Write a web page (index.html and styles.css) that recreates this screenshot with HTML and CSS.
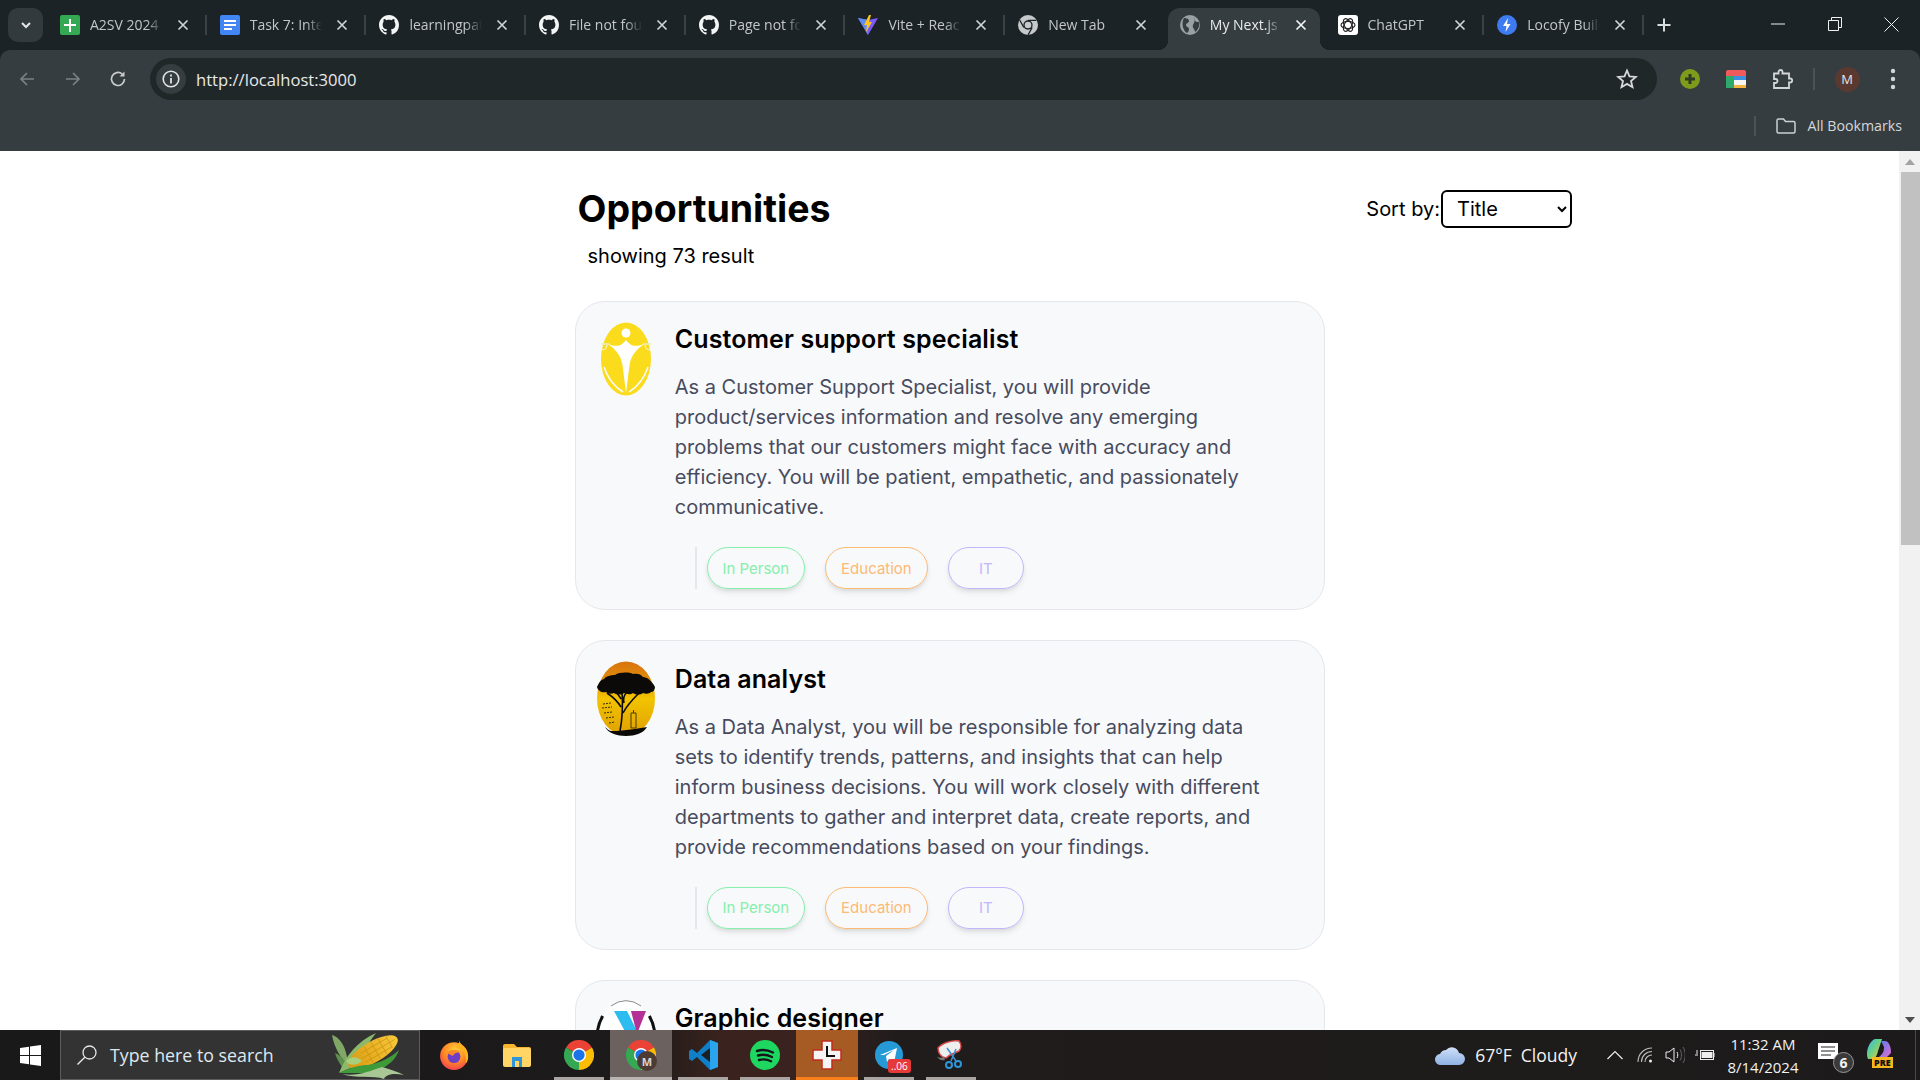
FILE: index.html
```html
<!DOCTYPE html>
<html lang="en">
<head>
<meta charset="utf-8">
<title>My Next.js App</title>
<link rel="stylesheet" href="styles.css">
</head>
<body>
<svg class="defs" aria-hidden="true">
  <defs>
    <symbol id="gh" viewBox="0 0 16 16"><path fill="#f4f5f5" d="M8 0C3.58 0 0 3.58 0 8c0 3.54 2.29 6.53 5.47 7.59.4.07.55-.17.55-.38 0-.19-.01-.82-.01-1.49-2.01.37-2.53-.49-2.69-.94-.09-.23-.48-.94-.82-1.13-.28-.15-.68-.52-.01-.53.63-.01 1.08.58 1.23.82.72 1.21 1.87.87 2.33.66.07-.52.28-.87.51-1.07-1.78-.2-3.64-.89-3.64-3.95 0-.87.31-1.59.82-2.15-.08-.2-.36-1.02.08-2.12 0 0 .67-.21 2.2.82.64-.18 1.32-.27 2-.27.68 0 1.36.09 2 .27 1.53-1.04 2.2-.82 2.2-.82.44 1.1.16 1.92.08 2.12.51.56.82 1.27.82 2.15 0 3.07-1.87 3.75-3.65 3.95.29.25.54.73.54 1.48 0 1.07-.01 1.93-.01 2.2 0 .21.15.46.55.38A8.013 8.013 0 0016 8c0-4.42-3.58-8-8-8z"/></symbol>
    <symbol id="x" viewBox="0 0 16 16"><path d="M3.500 3.500l9 9M12.500 3.500l-9 9" stroke="currentColor" stroke-width="1.700" fill="none"/></symbol>
    <symbol id="chrome" viewBox="0 0 24 24">
      <path fill="#ea4335" d="M12 12L1.600 6A12 12 0 0 1 22.400 6Z"/>
      <path fill="#34a853" d="M12 12L1.600 6A12 12 0 0 0 12 24Z"/>
      <path fill="#fbbc04" d="M12 12L22.400 6A12 12 0 0 1 12 24Z"/>
      <circle cx="12" cy="12" r="5.600" fill="#fff"/><circle cx="12" cy="12" r="4.500" fill="#1a73e8"/>
    </symbol>
    <radialGradient id="fox" cx=".55" cy=".3" r=".8"><stop offset="0" stop-color="#ffd43a"/><stop offset=".5" stop-color="#ff8a25"/><stop offset="1" stop-color="#f2305a"/></radialGradient>
    <linearGradient id="pilot" x1="0" y1="0" x2="1" y2="1"><stop offset="0" stop-color="#3fb6ef"/><stop offset=".45" stop-color="#66d08a"/><stop offset="1" stop-color="#f6c834"/></linearGradient>
    <linearGradient id="pilot2" x1="0" y1="0" x2="1" y2="1"><stop offset="0" stop-color="#4d7ff0"/><stop offset="1" stop-color="#e36cd0"/></linearGradient>
    <linearGradient id="sunset" x1="0" y1="0" x2="0" y2="1"><stop offset="0" stop-color="#d9730f"/><stop offset=".22" stop-color="#e08a0a"/><stop offset=".5" stop-color="#f3c400"/><stop offset="1" stop-color="#dfa000"/></linearGradient>
    <linearGradient id="kernel" x1="0" y1="0" x2="1" y2="0"><stop offset="0" stop-color="#d99a10"/><stop offset="1" stop-color="#f7c93a"/></linearGradient>
    <linearGradient id="cloudfill" x1="0" y1="0" x2="0" y2="1"><stop offset="0" stop-color="#cfe0f7"/><stop offset="1" stop-color="#8fb2e4"/></linearGradient>
  </defs>
</svg>

<header class="browser">
  <div class="strip">
    <div class="tab-search"><svg width="14" height="14" viewBox="0 0 14 14"><path d="M3 5l4 4 4-4" fill="none" stroke="#e3e5e6" stroke-width="2"/></svg></div>

    <div class="tab">
      <svg class="fav" viewBox="0 0 20 20"><rect x="0" width="20" height="20" rx="2" fill="#34a853"/><path d="M9 4h2v5h5v2h-5v6H9v-6H4V9h5z" fill="#fff"/></svg>
      <span class="tab-label">A2SV 2024 Cohort</span>
      <svg class="tab-x"><use href="#x"/></svg>
    </div>
    <div class="tab">
      <svg class="fav" viewBox="0 0 20 20"><rect width="20" height="20" rx="2" fill="#4285f4"/><path d="M4 5h12v2H4zM4 9h12v2H4zM4 13h8v2H4z" fill="#fff"/></svg>
      <span class="tab-label">Task 7: Integration</span>
      <svg class="tab-x"><use href="#x"/></svg>
    </div>
    <div class="tab">
      <svg class="fav"><use href="#gh"/></svg>
      <span class="tab-label">learningpath</span>
      <svg class="tab-x"><use href="#x"/></svg>
    </div>
    <div class="tab">
      <svg class="fav"><use href="#gh"/></svg>
      <span class="tab-label">File not found</span>
      <svg class="tab-x"><use href="#x"/></svg>
    </div>
    <div class="tab">
      <svg class="fav"><use href="#gh"/></svg>
      <span class="tab-label">Page not found</span>
      <svg class="tab-x"><use href="#x"/></svg>
    </div>
    <div class="tab">
      <svg class="fav" viewBox="0 0 20 20"><path d="M0 3l10 2 10-2-10 17z" fill="#7c5cf5"/><path d="M0 3l10 2v15z" fill="#5d8df2"/><path d="M11 0l-5 10h3l-1 7 6-10h-3l2-7z" fill="#ffc51e"/></svg>
      <span class="tab-label">Vite + React</span>
      <svg class="tab-x"><use href="#x"/></svg>
    </div>
    <div class="tab tab-before-active">
      <svg class="fav" viewBox="0 0 24 24"><circle cx="12" cy="12" r="12" fill="#c6c9ca"/><circle cx="12" cy="12" r="5.600" fill="#1c2327"/><circle cx="12" cy="12" r="4" fill="#c6c9ca"/><path d="M12 6.400h10M7 15l-5-9M17 15l-5 9" stroke="#1c2327" stroke-width="1.600"/></svg>
      <span class="tab-label">New Tab</span>
      <svg class="tab-x"><use href="#x"/></svg>
    </div>
    <div class="tab tab-active">
      <svg class="fav" viewBox="0 0 20 20"><circle cx="10" cy="10" r="10" fill="#9aa0a3"/><path d="M4 3c3 0 5 1 5 3s-3 2-3 4 3 2 3 4-1 3-2 4C3 16 1 8 4 3zM14 2c1 2 0 3 1 4s3 1 4 1c1 4-1 8-4 10 0-3-3-4-2-7s2-1 1-8z" fill="#363d41"/></svg>
      <span class="tab-label">My Next.js App</span>
      <svg class="tab-x"><use href="#x"/></svg>
    </div>
    <div class="tab">
      <svg class="fav" viewBox="0 0 20 20"><rect width="20" height="20" rx="3" fill="#fff"/><g fill="none" stroke="#222" stroke-width="1.100"><ellipse cx="10" cy="10" rx="7" ry="3.600"/><ellipse cx="10" cy="10" rx="7" ry="3.600" transform="rotate(60 10 10)"/><ellipse cx="10" cy="10" rx="7" ry="3.600" transform="rotate(120 10 10)"/></g></svg>
      <span class="tab-label">ChatGPT</span>
      <svg class="tab-x"><use href="#x"/></svg>
    </div>
    <div class="tab">
      <svg class="fav" viewBox="0 0 20 20"><circle cx="10" cy="10" r="10" fill="#3f7bf0"/><path d="M11 3L6 11h3.500L8.500 17l5-8H10z" fill="#fff"/></svg>
      <span class="tab-label">Locofy Builder</span>
      <svg class="tab-x"><use href="#x"/></svg>
    </div>

    <div class="new-tab"><svg width="16" height="16" viewBox="0 0 16 16"><path d="M8 1.500v13M1.500 8h13" stroke="#d9dcdd" stroke-width="2"/></svg></div>
    <div class="win-controls">
      <div class="win-btn"><svg width="14" height="14" viewBox="0 0 14 14"><path d="M0 7h14" stroke="#f0f0f0"/></svg></div>
      <div class="win-btn"><svg width="14" height="14" viewBox="0 0 14 14"><path d="M.5 3.500h10v10H.5zM3.500 3.500v-3h10v10h-3" fill="none" stroke="#f0f0f0"/></svg></div>
      <div class="win-btn"><svg width="15" height="15" viewBox="0 0 15 15"><path d="M.5.5l14 14M14.500.5l-14 14" stroke="#f0f0f0"/></svg></div>
    </div>
  </div>

  <div class="toolbar">
    <div class="nav-row">
      <div class="slot"><svg width="18" height="18" viewBox="0 0 18 18"><path d="M16 9H3M9 3L3 9l6 6" fill="none" stroke="#7b8083" stroke-width="1.700"/></svg></div>
      <div class="slot"><svg width="18" height="18" viewBox="0 0 18 18"><path d="M2 9h13M9 3l6 6-6 6" fill="none" stroke="#7b8083" stroke-width="1.700"/></svg></div>
      <div class="slot slot-reload"><svg width="18" height="18" viewBox="0 0 18 18"><path d="M15.500 9A6.500 6.500 0 1 1 13.300 4.100" fill="none" stroke="#c9cccd" stroke-width="1.700"/><path d="M15.500 1.500v5h-5z" fill="#c9cccd"/></svg></div>
      <div class="omnibox">
        <div class="site-info"><svg width="20" height="20" viewBox="0 0 20 20"><circle cx="10" cy="10" r="7.800" fill="none" stroke="#e1e3e4" stroke-width="1.600"/><path d="M10 9v5.500M10 5.500v2" stroke="#e1e3e4" stroke-width="1.800"/></svg></div>
        <span class="url">http://localhost:3000</span>
        <svg class="star" width="22" height="22" viewBox="0 0 22 22"><path d="M11 2.500l2.500 5.800 6.300.6-4.800 4.100 1.500 6.200-5.500-3.300-5.500 3.300 1.500-6.200-4.800-4.100 6.300-.6z" fill="none" stroke="#d6d8d9" stroke-width="1.800"/></svg>
      </div>
      <div class="actions">
        <div class="slot"><svg width="20" height="20" viewBox="0 0 20 20"><circle cx="10" cy="10" r="10" fill="#7d9c1c"/><path d="M10 5v10M5 10h10" stroke="#2f3b22" stroke-width="3"/></svg></div>
        <div class="slot"><svg width="20" height="18" viewBox="0 0 20 18"><rect width="20" height="18" rx="2" fill="#f15a5a"/><rect y="6" width="8" height="12" fill="#2fa96b"/><rect x="8" y="6" width="12" height="12" fill="#3f8fe0"/><rect x="8" y="10" width="12" height="7" fill="#f5f5f5"/><rect x="8" y="15" width="12" height="3" fill="#f5b53f"/></svg></div>
        <div class="slot"><svg width="22" height="22" viewBox="0 0 22 22"><path d="M3 5.500h4.500V4a2 2 0 0 1 4 0v1.500H18v5h1.200a2 2 0 0 1 0 4H18V20H3v-5h1.500a2 2 0 0 0 0-4H3z" fill="none" stroke="#d3d6d7" stroke-width="1.800"/></svg></div>
        <div class="action-sep"></div>
        <div class="slot"><span class="avatar">M</span></div>
        <div class="slot"><svg width="6" height="22" viewBox="0 0 6 22"><circle cx="3" cy="3" r="2.200" fill="#d3d6d7"/><circle cx="3" cy="11" r="2.200" fill="#d3d6d7"/><circle cx="3" cy="19" r="2.200" fill="#d3d6d7"/></svg></div>
      </div>
    </div>
    <div class="bookmarks">
      <div class="bm-sep"></div>
      <svg width="20" height="16" viewBox="0 0 20 16"><path d="M1 2.500a1.500 1.500 0 0 1 1.500-1.500h5l2 2.500h8a1.500 1.500 0 0 1 1.500 1.500v8.500a1.500 1.500 0 0 1-1.500 1.500h-15a1.500 1.500 0 0 1-1.500-1.500z" fill="none" stroke="#cdd0d1" stroke-width="1.500"/></svg>
      <span class="bm-label">All Bookmarks</span>
    </div>
  </div>
</header>

<main class="viewport">
  <div class="page">
    <div class="page-head">
      <h1 class="page-title">Opportunities</h1>
      <div class="sort">
        <label class="sort-label" for="sort">Sort by:</label>
        <select class="sort-select" id="sort"><option>Title</option><option>Date</option></select>
      </div>
    </div>
    <p class="result-count">showing 73 result</p>

    <div class="cards">
      <article class="card">
        <svg class="logo" viewBox="0 0 60 75">
          <ellipse cx="30" cy="38" rx="25" ry="36.500" fill="#fbdc1c"/>
          <circle cx="30" cy="12" r="4.500" fill="#fff"/>
          <path d="M12 23C22 27 26 24 30 19 34 24 38 27 48 23 41 28 35 34 33.500 44L30 72 26.500 44C25 34 19 28 12 23Z" fill="#fff"/>
          <path d="M5 23H13M47 23H55" stroke="#e9efc0" stroke-width="1.500"/>
          <path d="M8 46C12 58 19 66 27 71M52 46C48 58 41 66 33 71" fill="none" stroke="#f8f9fb" stroke-width="1.600"/>
          <path d="M5 26C6 30 10 30 11 24M55 26C54 30 50 30 49 24" fill="none" stroke="#f8f9fb"/>
        </svg>
        <div class="card-body">
          <h2 class="card-title">Customer support specialist</h2>
          <p class="card-desc">As a Customer Support Specialist, you will provide product/services information and resolve any emerging problems that our customers might face with accuracy and efficiency. You will be patient, empathetic, and passionately communicative.</p>
          <div class="chips">
            <span class="chip chip-green">In Person</span>
            <span class="chip chip-orange">Education</span>
            <span class="chip chip-purple">IT</span>
          </div>
        </div>
      </article>

      <article class="card">
        <svg class="logo" viewBox="0 0 60 75">
          <ellipse cx="30" cy="37.500" rx="29" ry="37" fill="url(#sunset)"/>
          <path d="M1 26c2-4 3-7 7-8 2-3 7-4 11-4 4-3 14-3 18-1 4-1 8 0 10 3 4 0 9 4 12 10 0 3-2 5-4 5-2 2-5 2-8 1-3 2-7 2-10 0-3 2-6 1-9 0-3 2-7 2-10 0-3 1-6 1-8-1-4 1-8-1-9-5z" fill="#0c0a08"/>
          <path d="M24 70c2-10 3-24 2-40M27 52c3-6 8-12 16-20M25 46c-3-5-8-10-14-14M28 42c-1-4 0-8 3-11M25 38c-2-3-3-5-5-7" fill="none" stroke="#0c0a08" stroke-width="1.600"/>
          <path d="M9 66c3 2 3 4 8 4 8 0 22-2 34-4-3 6-12 9-21 9S12 72 9 66z" fill="#0c0a08"/>
          <path d="M7 43l8-1M6 47l10-1M8 52l8-1M10 57l8-1M13 62l6-1" stroke="#3a2d00" fill="none" stroke-dasharray="2 1"/>
          <path d="M35 52h5v15h-5zM37.500 49v3" fill="none" stroke="#4a3a00"/>
        </svg>
        <div class="card-body">
          <h2 class="card-title">Data analyst</h2>
          <p class="card-desc">As a Data Analyst, you will be responsible for analyzing data sets to identify trends, patterns, and insights that can help inform business decisions. You will work closely with different departments to gather and interpret data, create reports, and provide recommendations based on your findings.</p>
          <div class="chips">
            <span class="chip chip-green">In Person</span>
            <span class="chip chip-orange">Education</span>
            <span class="chip chip-purple">IT</span>
          </div>
        </div>
      </article>

      <article class="card">
        <svg class="logo" viewBox="0 0 60 75">
          <ellipse cx="30" cy="38" rx="29" ry="37" fill="#fff"/>
          <path d="M15 6A29 37 0 0 1 45 6" fill="none" stroke="#8a8a8a"/>
          <path d="M6.700 16A29 37 0 0 0 1 38M53.300 16A29 37 0 0 1 59 38" fill="none" stroke="#111" stroke-width="3"/>
          <path d="M18 11h13l14 28H33z" fill="#2cbcef"/>
          <path d="M35 11h15L41 34z" fill="#b23296"/>
        </svg>
        <div class="card-body">
          <h2 class="card-title">Graphic designer</h2>
        </div>
      </article>
    </div>
  </div>

  <div class="scrollbar">
    <div class="scroll-btn"><span class="arrow-up"></span></div>
    <div class="scroll-track"><div class="scroll-thumb"></div></div>
    <div class="scroll-btn"><span class="arrow-down"></span></div>
  </div>
</main>

<footer class="taskbar">
  <div class="start"><svg width="21" height="21" viewBox="0 0 21 21"><path d="M0 3l9-1.300V10H0zM10 1.500L21 0v10H10zM0 11h9v8.300L0 18zM10 11h11v10l-11-1.500z" fill="#fff"/></svg></div>
  <div class="search">
    <svg width="22" height="22" viewBox="0 0 22 22"><circle cx="13.500" cy="8.500" r="6.500" fill="none" stroke="#e6e6e6" stroke-width="1.300"/><path d="M8.800 13.200L1.500 20.500" stroke="#e6e6e6" stroke-width="1.400"/></svg>
    <span class="search-text">Type here to search</span>
    <svg class="corn" width="74" height="48" viewBox="0 0 74 48">
      <path d="M0 4C7 6 13 14 15 26L22 33 17 36C9 28 2 16 0 4Z" fill="#7fa867"/>
      <path d="M3 22C8 24 12 28 15 33L10 36C7 31 4 27 3 22Z" fill="#5f8f4c"/>
      <path d="M7 42C14 24 26 10 44 2 38 10 32 18 30 32Z" fill="#8bb86a"/>
      <g transform="rotate(-30 41 21)">
        <ellipse cx="41" cy="21" rx="28" ry="10.500" fill="url(#kernel)"/>
        <path d="M30 16h30M28 21h38M30 26h30M36 12v18M44 12v18M52 12v18M60 13v14" stroke="#c98c0c" stroke-width=".6" fill="none"/>
      </g>
      <path d="M7 42C20 36 28 34 36 34 48 32 60 26 67 19 62 34 46 42 28 42Z" fill="#3f9a3a"/>
      <path d="M14 30C20 24 26 26 30 30 26 34 18 36 14 30Z" fill="#a8cf7e"/>
      <path d="M10 43C24 46 38 40 50 36 58 38 66 41 72 44 62 42 54 43 52 48 42 44 24 48 10 43Z" fill="#a9c795"/>
    </svg>
  </div>

  <div class="apps">
    <div class="app app-fox"><svg width="30" height="30" viewBox="0 0 28 28"><circle cx="14" cy="15" r="13" fill="url(#fox)"/><path d="M19 0c0 3 3 5 6 8 3 5 3 11 0 14C26 15 23 8 16 7c2-2 3-4 3-7z" fill="#ffb21e"/><circle cx="14" cy="15.500" r="6" fill="#6e3fc4"/><path d="M7 12c3-3 10-4 14 0-4-1-7 0-8 3z" fill="#ff8a25"/></svg></div>
    <div class="app"><svg width="28" height="24" viewBox="0 0 28 24"><path d="M0 3a2 2 0 0 1 2-2h9l3 3h12a2 2 0 0 1 2 2v4H0z" fill="#f5b52e"/><rect y="5" width="28" height="19" rx="2" fill="#ffd665"/><path d="M9 14h10v10h-3v-6h-4v6H9z" fill="#2e96d8"/></svg></div>
    <div class="app app-running"><svg width="30" height="30"><use href="#chrome"/></svg></div>
    <div class="app app-running app-hover">
      <svg width="30" height="30"><use href="#chrome"/></svg>
      <span class="app-m">M</span>
    </div>
    <div class="app app-running"><svg width="29" height="30" viewBox="0 0 29 30"><path d="M21 0L8 13 3 9 0 11v8l3 2 5-4 13 13 8-3V3z" fill="#0f7fc9"/><path d="M21 0l8 3v24l-8 3z" fill="#2aa4ec"/><path d="M21 8v14l-9-7z" fill="#1c2023"/></svg></div>
    <div class="app app-running"><svg width="30" height="30" viewBox="0 0 30 30"><circle cx="15" cy="15" r="15" fill="#1ed760"/><path d="M7 11c6-2 11-1 16 1.500M8 15.500c5-1.500 9-1 14 1.500M9 20c4-1 8-.8 12 1.200" fill="none" stroke="#14171a" stroke-width="2.400" stroke-linecap="round"/></svg></div>
    <div class="app app-active"><svg width="30" height="30" viewBox="0 0 30 30"><path d="M10 1h10v9h9v10h-9v9H10v-9H1V10h9z" fill="#f4f4f4" stroke="#c42b1c" stroke-width="1.500"/><path d="M15 6v10h8" fill="none" stroke="#111" stroke-width="2"/></svg></div>
    <div class="app app-running">
      <svg width="28" height="28" viewBox="0 0 28 28"><circle cx="14" cy="14" r="14" fill="#259ad6"/><path d="M5 14L22 7l-3 15-5-4-2 3-1-6 8-6-10 5z" fill="#fff"/></svg>
      <span class="app-count">..06</span>
    </div>
    <div class="app app-running"><svg width="30" height="30" viewBox="0 0 30 30"><path d="M2 8C6 3 16 0 23 1c3 4 2 8 0 10L14 15 10 18C5 17 2 13 2 8z" fill="#eee" stroke="#d84a4a" stroke-width="1.500"/><path d="M8 17c-3 1-6 1-7-1 1 3 4 5 8 4z" fill="#777"/><path d="M11 8l9 13M20 9l-5 12" stroke="#3d8fd0" stroke-width="1.500"/><circle cx="22" cy="24" r="3" fill="none" stroke="#2e96d8" stroke-width="2"/><circle cx="13" cy="25" r="3" fill="none" stroke="#2e96d8" stroke-width="2"/></svg></div>
  </div>

  <div class="tray">
    <div class="weather">
      <svg width="30" height="22" viewBox="0 0 30 22"><path d="M6 21a5.500 5.500 0 0 1-1-11 7 7 0 0 1 6-4 7.500 7.500 0 0 1 13 3 6 6 0 0 1 0 12z" fill="url(#cloudfill)"/></svg>
      <span class="weather-text">67°F&nbsp; Cloudy</span>
    </div>
    <div class="tray-slot"><svg width="16" height="10" viewBox="0 0 16 10"><path d="M.5 9L8 1.500 15.500 9" fill="none" stroke="#eee" stroke-width="1.200"/></svg></div>
    <div class="tray-slot"><svg width="16" height="16" viewBox="0 0 16 16"><path d="M1 15C1 7 7 1 15 1M4.500 15C4.500 9 9 4.500 15 4.500M8 15c0-4 3-7 7-7" fill="none" stroke="#bdbdbd" stroke-width="1.100"/><circle cx="13.500" cy="14" r="1.500" fill="#eee"/></svg></div>
    <div class="tray-slot"><svg width="20" height="18" viewBox="0 0 20 18"><path d="M1 6h3l5-4v14l-5-4H1z" fill="none" stroke="#eee"/><path d="M12 6c1 2 1 4 0 6" fill="none" stroke="#eee"/><path d="M15 3.500c2 3.500 2 7.500 0 11M18 1c3 5 3 11 0 16" fill="none" stroke="#666"/></svg></div>
    <div class="tray-slot"><svg width="20" height="12" viewBox="0 0 20 12"><rect x="5.500" y="1.500" width="13" height="9" fill="none" stroke="#eee"/><rect x="6.500" y="3" width="11" height="6" fill="#eee"/><path d="M19 4v4" stroke="#eee"/><path d="M0 6h3M2 1v4" stroke="#eee"/></svg></div>
    <div class="clock"><span>11:32 AM</span><span>8/14/2024</span></div>
    <div class="notify">
      <svg width="22" height="18" viewBox="0 0 22 18"><path d="M0 0h20v16H0z" fill="#fff"/><path d="M3 4h14M3 8h14M3 12h10" stroke="#222" stroke-width="1.200"/></svg>
      <span class="notify-count">6</span>
    </div>
    <div class="copilot">
      <svg width="26" height="24" viewBox="0 0 26 24"><path d="M9 0h7l-4 12c-1 5-3 8-7 8H2C-1 14 3 2 9 0z" fill="url(#pilot)"/><path d="M15 2h4c4 0 6 6 6 12l-4 4h-8c4-3 5-6 5-10z" fill="url(#pilot2)"/></svg>
      <span class="pre">PRE</span>
    </div>
    <div class="show-desktop"></div>
  </div>
</footer>
</body>
</html>
```

FILE: styles.css
```css
* { box-sizing: border-box; }

html, body { margin: 0; height: 100%; }

body {
  display: flex;
  flex-direction: column;
  width: 1920px;
  height: 1080px;
  overflow: hidden;
  background: #fff;
  font-family: "Inter", "Liberation Sans", sans-serif;
}

.defs { position: absolute; width: 0; height: 0; }

/* Browser chrome */
.browser { flex: none; background: #1c2327; font-family: "Open Sans", "Noto Sans", sans-serif; }

.strip { display: flex; height: 50px; padding: 8px 0 0 8px; }

.tab-search {
  flex: none;
  width: 35px;
  height: 34px;
  margin-right: 3px;
  display: flex;
  align-items: center;
  justify-content: center;
  background: #333a3e;
  border-radius: 10px;
}

.tab {
  position: relative;
  flex: none;
  width: 159.7px;
  height: 42px;
  padding: 0 15px 8px 14px;
  display: flex;
  align-items: center;
  gap: 10px;
  color: #c3c6c8;
}

.tab::after {
  content: "";
  position: absolute;
  right: -1px;
  top: 7px;
  width: 2px;
  height: 20px;
  background: #3a4246;
}

.tab-before-active::after { display: none; }

.tab-active {
  width: 151.7px;
  margin: 0 4px;
  padding: 0 11px 8px 12px;
  background: #363d41;
  border-radius: 12px 12px 0 0;
  color: #e7e9ea;
}

.tab-active::before {
  content: "";
  position: absolute;
  left: -10px;
  bottom: 0;
  width: 10px;
  height: 10px;
  background: radial-gradient(circle at 0 0, transparent 10px, #363d41 10.5px);
}

.tab-active::after {
  right: -10px;
  top: auto;
  bottom: 0;
  width: 10px;
  height: 10px;
  background: radial-gradient(circle at 100% 0, transparent 10px, #363d41 10.5px);
}

.fav { flex: none; width: 20px; height: 20px; }

.tab-label {
  flex: 1;
  min-width: 0;
  margin-right: 4px;
  overflow: hidden;
  white-space: nowrap;
  font-size: 14px;
  line-height: 20px;
  -webkit-mask-image: linear-gradient(to right, #000 78%, transparent 100%);
  mask-image: linear-gradient(to right, #000 78%, transparent 100%);
}

.tab-x { flex: none; width: 16px; height: 16px; margin-left: -2px; color: #d0d3d4; }
.tab-active .tab-x { color: #f2f3f3; }

.new-tab {
  flex: none;
  width: 32px;
  height: 34px;
  margin-left: 5px;
  display: flex;
  align-items: center;
  justify-content: center;
}

.win-controls { display: flex; margin: -8px 0 0 auto; height: 48px; }
.win-btn { width: 57px; display: flex; align-items: center; justify-content: center; }

.toolbar {
  height: 101px;
  background: #363d41;
  border-radius: 10px 10px 0 0;
  padding-top: 8px;
}

.nav-row { display: flex; align-items: center; height: 42px; padding-left: 4px; }

.slot {
  flex: none;
  width: 46px;
  height: 42px;
  display: flex;
  align-items: center;
  justify-content: center;
}

.slot-reload { padding-right: 2px; }

.omnibox {
  flex: 1;
  height: 42px;
  margin-left: 8px;
  display: flex;
  align-items: center;
  background: #202729;
  border-radius: 21px;
  padding: 0 19px 0 6px;
}

.site-info {
  width: 30px;
  height: 30px;
  border-radius: 50%;
  background: #363d41;
  display: flex;
  align-items: center;
  justify-content: center;
}

.url { flex: 1; margin-left: 10px; color: #e7e9ea; font-size: 16.6px; }
.star { flex: none; }

.actions { flex: none; width: 263px; display: flex; align-items: center; padding-left: 10px; }
.action-sep { flex: none; width: 2px; height: 22px; margin: 0 9px 0 8px; background: #4c5357; }

.avatar {
  width: 25px;
  height: 25px;
  border-radius: 50%;
  background: #5a3a30;
  color: #e9e4e2;
  font-size: 13px;
  display: flex;
  align-items: center;
  justify-content: center;
}

.bookmarks {
  height: 51px;
  display: flex;
  align-items: center;
  justify-content: flex-end;
  padding: 0 18px 0 0;
}

.bm-sep { width: 2px; height: 20px; margin-right: 20px; background: #4c5357; }
.bm-label { margin-left: 11px; color: #d4d7d8; font-size: 14.2px; }

/* Page */
.viewport { flex: 1; min-height: 0; display: flex; overflow: hidden; }

.page { flex: 1; min-width: 0; padding: 35px 0 0 575px; overflow: hidden; }

.page-head {
  width: 997px;
  height: 45px;
  display: flex;
  align-items: center;
  justify-content: space-between;
}

.page-title { margin: 0 0 0 2.5px; font-size: 37.5px; line-height: 45px; font-weight: 700; color: #000; }

.sort { display: flex; align-items: center; gap: 1px; }
.sort-label { font-size: 20px; color: #000; }

.sort-select {
  width: 131px;
  height: 38px;
  padding: 0 10px;
  font: 20px "Inter", sans-serif;
  color: #000;
  background: #fff;
  border: 2.5px solid #000;
  border-radius: 6px;
}

.result-count { margin: 10px 0 30px 12.5px; font-size: 20px; line-height: 30px; color: #000; }

.cards { width: 750px; display: flex; flex-direction: column; gap: 30px; }

.card {
  display: flex;
  gap: 18.75px;
  padding: 19.25px 20px 20px;
  background: #f8f9fb;
  border: 1.25px solid #e5e7eb;
  border-radius: 30px;
}

.logo { flex: none; width: 60px; height: 75px; }

.card-body { flex: 1; min-width: 0; }

.card-title { margin: 0 0 15px; font-size: 25px; line-height: 36px; font-weight: 600; letter-spacing: .1px; color: #000; }

.card-desc { margin: 0 0 25px; width: 605px; font-size: 20px; line-height: 30px; color: #474b5e; }

.chips {
  display: flex;
  align-items: center;
  gap: 20px;
  margin-left: 20px;
  padding-left: 10px;
  border-left: 2px solid #e5e7eb;
}

.chip {
  height: 42px;
  padding: 0 14.7px;
  display: flex;
  align-items: center;
  font-size: 15px;
  border: 1.25px solid;
  border-radius: 21px;
  box-shadow: 0 4px 6px -1px rgba(0, 0, 0, .1), 0 2px 4px -2px rgba(0, 0, 0, .1);
}

.chip-green { border-color: #86efac; color: #86efac; }
.chip-orange { border-color: #fdba74; color: #fdba74; padding: 0 15.2px; }
.chip-purple { border-color: #c4b5fd; color: #c4b5fd; padding: 0 30px; }

/* Scrollbar */
.scrollbar { flex: none; width: 21px; display: flex; flex-direction: column; background: #f1f1f1; }

.scroll-btn { flex: none; height: 21px; display: flex; align-items: center; justify-content: center; }

.arrow-up, .arrow-down { width: 0; height: 0; border-left: 5px solid transparent; border-right: 5px solid transparent; }
.arrow-up { border-bottom: 6px solid #a3a3a3; }
.arrow-down { border-top: 6px solid #505050; }

.scroll-track { flex: 1; padding-left: 2px; }
.scroll-thumb { height: 373px; background: #c1c1c1; }

/* Taskbar */
.taskbar {
  flex: none;
  height: 50px;
  display: flex;
  color: #f2f2f2;
  background: linear-gradient(to right, #1a1919 0, #1c1a1a 640px, #3a231e 720px, #3a231e 790px, #201c1c 900px, #1c1a1a 100%);
  font-family: "Open Sans", "Noto Sans", sans-serif;
}

.start { flex: none; width: 60px; display: flex; align-items: center; justify-content: center; }

.search {
  flex: none;
  width: 360px;
  display: flex;
  align-items: center;
  padding-left: 15px;
  background: #333;
  border: 1.25px solid #5c5c5c;
  position: relative;
}

.search-text { margin-left: 12px; font-size: 17.8px; color: #dfe8f0; }
.corn { margin-left: auto; margin-right: 13px; }

.apps { display: flex; margin-left: 4px; }

.app {
  position: relative;
  flex: none;
  width: 62px;
  display: flex;
  align-items: center;
  justify-content: center;
}

.app-fox { padding-right: 3px; }

.app-running::after {
  content: "";
  position: absolute;
  left: 6px;
  right: 6px;
  bottom: 0;
  height: 3px;
  background: #aaa5a2;
}

.app-hover { background: #6b6260; }
.app-hover::after { left: 0; right: 0; background: #b9b4b1; }

.app-active { background: #a65b24; }
.app-active::after {
  content: "";
  position: absolute;
  left: 0;
  right: 0;
  bottom: 0;
  height: 3px;
  background: #f7801a;
}

.app-m {
  position: absolute;
  left: 27px;
  top: 21px;
  width: 20px;
  height: 20px;
  border-radius: 50%;
  background: #4d3a33;
  color: #d9d4d1;
  font-size: 11px;
  font-weight: 700;
  display: flex;
  align-items: center;
  justify-content: center;
}

.app-count {
  position: absolute;
  left: 30px;
  top: 29px;
  height: 14px;
  padding: 0 3px;
  border-radius: 3px;
  background: #e5393a;
  color: #fff;
  font-size: 10px;
  line-height: 14px;
}

.tray { margin-left: auto; display: flex; align-items: center; }

.weather { display: flex; align-items: center; gap: 10px; margin-right: 23px; }
.weather-text { font-size: 17.5px; }

.tray-slot { flex: none; width: 30px; display: flex; justify-content: center; }

.clock {
  flex: none;
  width: 86px;
  display: flex;
  flex-direction: column;
  align-items: center;
  gap: 3px;
  font-size: 15px;
  line-height: 20px;
}

.notify { position: relative; flex: none; width: 49px; display: flex; justify-content: center; padding-right: 4px; margin-top: -6px; }

.notify-count {
  position: absolute;
  left: 27px;
  top: 9px;
  width: 21px;
  height: 21px;
  border-radius: 50%;
  border: 1px solid #999;
  background: #3a3a3a;
  font-size: 14px;
  font-weight: 700;
  display: flex;
  align-items: center;
  justify-content: center;
}

.copilot { position: relative; flex: none; width: 48px; display: flex; justify-content: center; margin-top: -8px; }

.pre {
  position: absolute;
  left: 17px;
  top: 18px;
  padding: 0 2px;
  background: #f5b81e;
  color: #111;
  font-size: 9px;
  line-height: 11px;
  font-weight: 800;
}

.show-desktop { flex: none; width: 13px; height: 50px; margin-right: 4px; border-right: 1px solid #4a4a4a; }
```
